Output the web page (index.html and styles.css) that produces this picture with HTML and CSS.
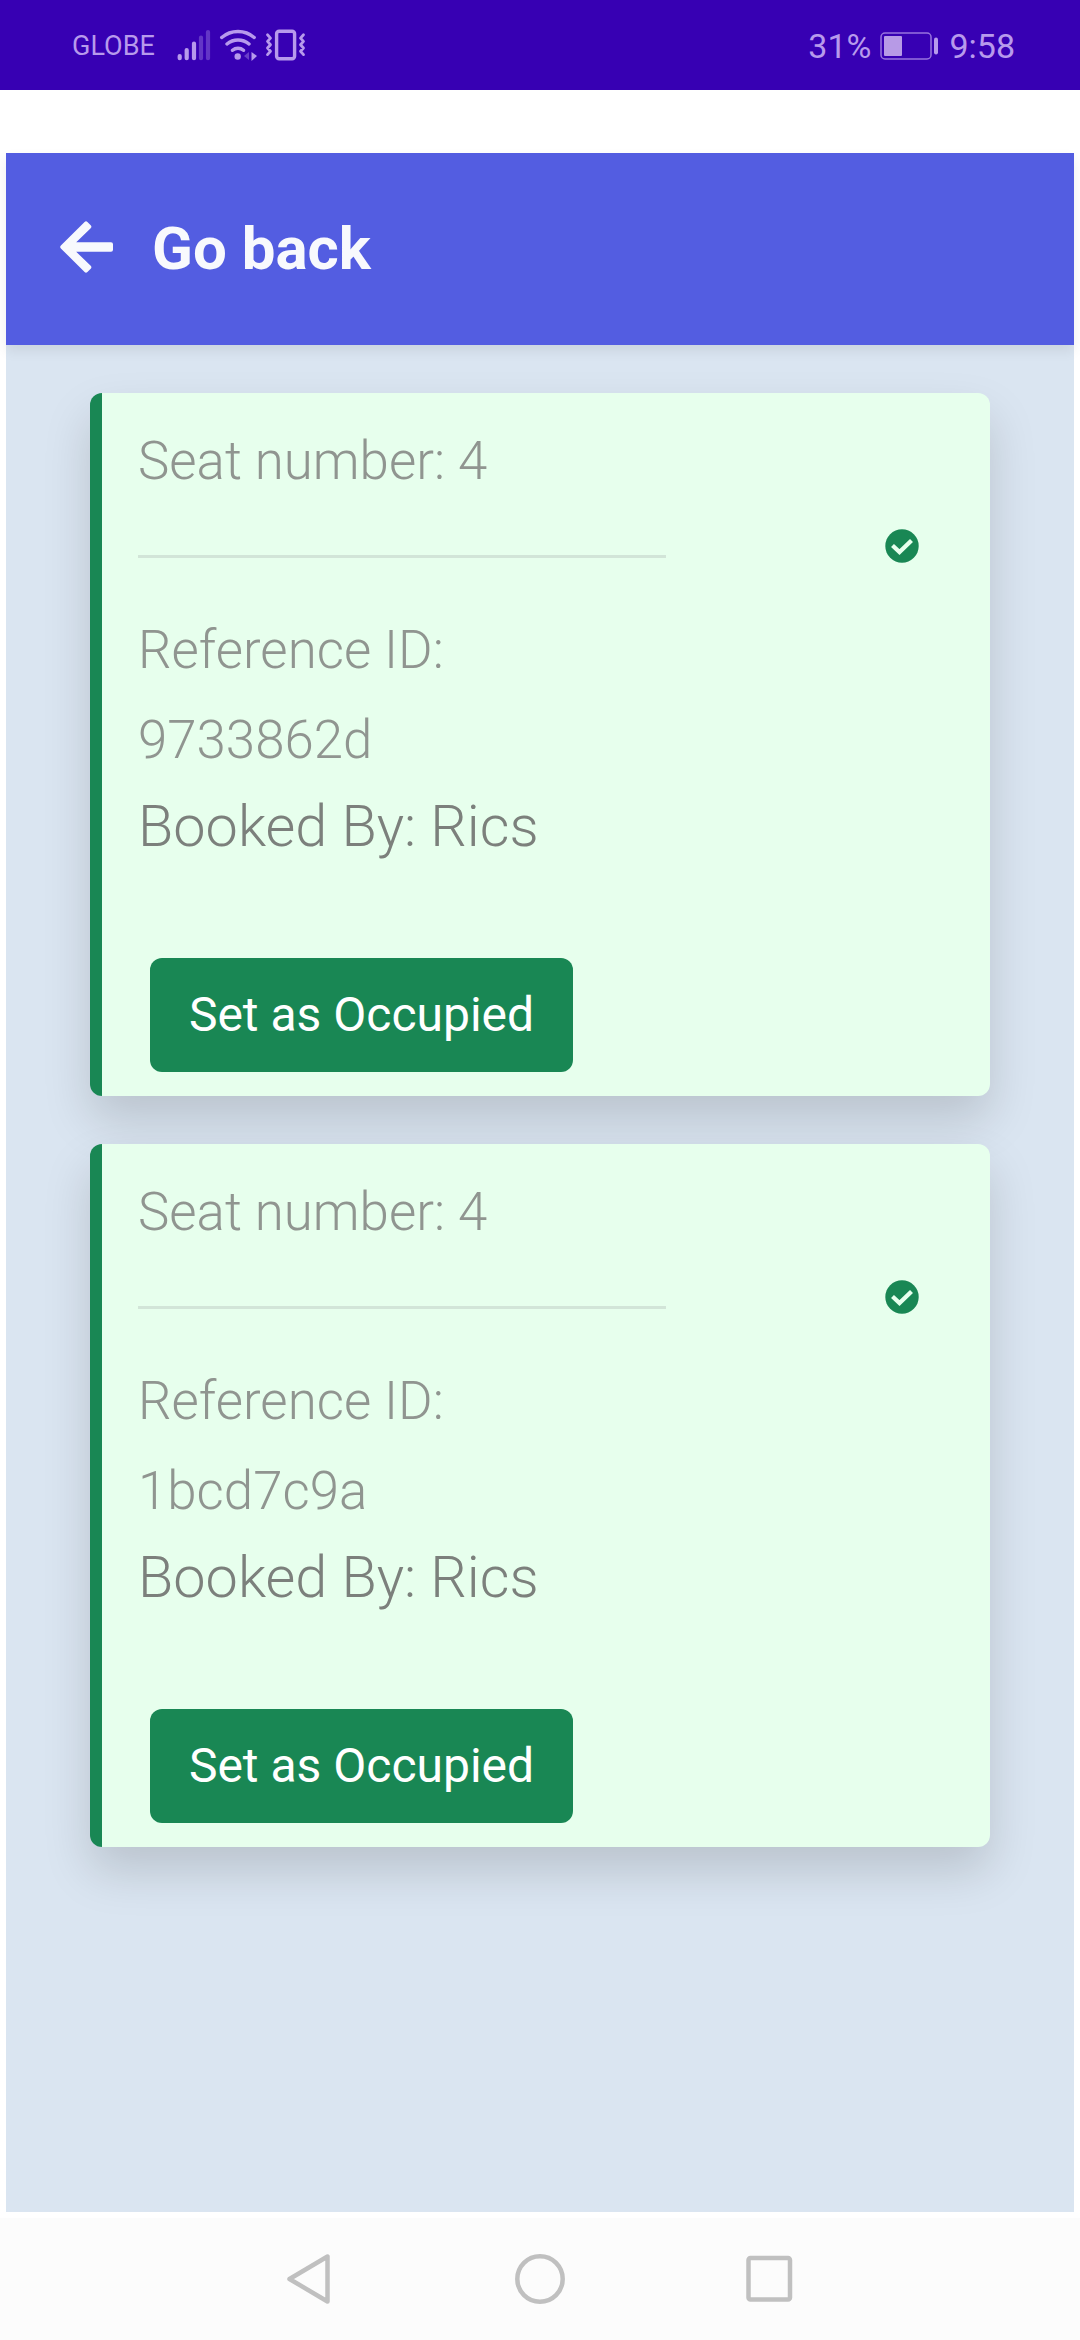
FILE: index.html
```html
<!DOCTYPE html>
<html lang="en">
<head>
<meta charset="utf-8">
<title>Bookings</title>
<link rel="stylesheet" href="styles.css">
</head>
<body>
<div class="status">
  <span class="carrier">GLOBE</span>
  <svg class="status-icons" width="136" height="40" viewBox="0 0 136 40" fill="none" stroke="#b79aec" stroke-linecap="round" stroke-linejoin="round">
    <g stroke-width="4.200"><path d="M6.700 31v2.200M13.700 25v8.200M21 18.500v14.700"/><path opacity=".35" d="M28 12.500v20.700M35 7v26.200"/></g>
    <g stroke-width="3.400"><path d="M48.700 12.500a25 25 0 0 1 32.500 0M54 19a17 17 0 0 1 22 0M59.500 25.300a8.500 8.500 0 0 1 11 0"/></g>
    <circle cx="64.700" cy="31.500" r="3.200" fill="#b79aec" stroke="none"/>
    <path d="M76 27v8l-5-4z" fill="#b79aec" stroke="none" opacity=".4"/>
    <path d="M78.500 27v9l5.500-5z" fill="#b79aec" stroke="none"/>
    <rect x="103.600" y="6.300" width="18" height="27.500" rx="2.500" stroke-width="3.400"/>
    <path stroke-width="2.800" d="M94.500 9.800l3 3.300-3 3.300 3 3.300-3 3.300 3 3.300-3 3.300M130.500 9.800l-3 3.300 3 3.300-3 3.300 3 3.300-3 3.300 3 3.300"/>
  </svg>
  <span class="spacer"></span>
  <span class="level">31%</span>
  <svg class="battery" width="60" height="30" viewBox="0 0 60 30">
    <rect x="1" y="2" width="50" height="26" rx="4" fill="none" stroke="#9873de" stroke-width="1.500"/>
    <rect x="4" y="5" width="18" height="20" rx="1" fill="#b79ae6"/>
    <rect x="54" y="6.500" width="4" height="17" rx="2" fill="#b79aec"/>
  </svg>
  <span class="clock">9:58</span>
</div>
<main class="app">
  <header class="topbar">
    <svg class="back" width="53" height="52" viewBox="0 0 53 52" fill="#f8f9fd" stroke="#f8f9fd" stroke-width="4" stroke-linejoin="round"><path d="M2.300 26L26 2.400l3.300 3.300L11.200 23.300H51v5.400H11.200l18.100 17.600L26 49.600z"/></svg>
    <h1 class="title">Go back</h1>
  </header>
  <section class="list">
    <article class="card">
      <div class="info">
        <p class="muted">Seat number: 4</p>
        <hr class="rule">
        <p class="muted">Reference ID:<br>9733862d</p>
        <p class="booked">Booked By: Rics</p>
        <button class="action">Set as Occupied</button>
      </div>
      <svg class="check" width="34" height="34" viewBox="0 0 34 34"><circle cx="17" cy="17" r="16.700" fill="#198754"/><path d="M7.500 16.500l7 6.500L26.500 11.500" fill="none" stroke="#e7ffed" stroke-width="4.300"/></svg>
    </article>
    <article class="card">
      <div class="info">
        <p class="muted">Seat number: 4</p>
        <hr class="rule">
        <p class="muted">Reference ID:<br>1bcd7c9a</p>
        <p class="booked">Booked By: Rics</p>
        <button class="action">Set as Occupied</button>
      </div>
      <svg class="check" width="34" height="34" viewBox="0 0 34 34"><circle cx="17" cy="17" r="16.700" fill="#198754"/><path d="M7.500 16.500l7 6.500L26.500 11.500" fill="none" stroke="#e7ffed" stroke-width="4.300"/></svg>
    </article>
  </section>
</main>
<nav class="navbar">
  <svg width="50" height="54" viewBox="0 0 50 54"><path d="M41.500 4.500v45L3.500 27z"/></svg>
  <svg width="54" height="54" viewBox="0 0 54 54"><circle cx="27" cy="27" r="22.700"/></svg>
  <svg width="50" height="54" viewBox="0 0 50 54"><rect x="4.500" y="6" width="41.500" height="41.500" rx="2"/></svg>
</nav>
</body>
</html>
```

FILE: styles.css
```css
* { box-sizing: border-box; }
body {
  margin: 0;
  height: 2340px;
  display: flex;
  flex-direction: column;
  background: #fff;
  font-family: Roboto, sans-serif;
}
svg { display: block; flex: none; }
.status {
  height: 90px;
  padding: 2px 65px 0 72px;
  display: flex;
  align-items: center;
  background: #3700b3;
  color: #b79aec;
  font-size: 34px;
  white-space: nowrap;
}
.carrier { font-size: 27px; width: 101px; }
.status-icons { margin-top: -2px; }
.spacer { flex: 1; }
.battery { margin: -1px 9px 0 9px; }
.app {
  margin: 63px 6px 0;
  height: 2059px;
  background: #dae5f1;
}
.topbar {
  height: 192px;
  padding-left: 54px;
  display: flex;
  align-items: center;
  background: #535de1;
  box-shadow: 0 6px 12px rgba(0, 0, 0, .075);
  color: #f8f9fd;
}
.back { margin-top: -4px; }
.title {
  margin: 0 0 0 39px;
  font-size: 60px;
  font-weight: 700;
  line-height: 90px;
}
.list {
  padding: 48px 84px;
  display: flex;
  flex-direction: column;
  gap: 48px;
}
.card {
  height: 703px;
  padding: 23px 71px 0 36px;
  display: flex;
  justify-content: space-between;
  border-left: 12px solid #198754;
  border-radius: 12px;
  background: #e7ffed;
  box-shadow: 0 24px 48px rgba(0, 0, 0, .15);
}
.info { width: 528px; }
.muted {
  margin: 0;
  font-size: 52.800px;
  font-weight: 300;
  line-height: 90px;
  color: #909590;
}
.rule {
  height: 3px;
  margin: 49px 0 47px;
  border: 0;
  background: #d2e5d8;
}
.booked {
  margin: 7px 0 97px;
  font-size: 57.600px;
  font-weight: 300;
  line-height: 69px;
  color: #7c807c;
}
.action {
  display: block;
  width: 423px;
  height: 114px;
  margin: 0 0 0 12px;
  padding: 0;
  border: 0;
  border-radius: 12px;
  background: #198754;
  color: #fff;
  font: 400 48px/72px Roboto, sans-serif;
}
.check { margin-top: 113px; }
.navbar {
  margin-top: 6px;
  height: 122px;
  padding: 0 286px;
  display: flex;
  align-items: center;
  justify-content: space-between;
  background: #fcfcfc;
}
.navbar svg { fill: none; stroke: #c0c0c0; stroke-width: 4.500; stroke-linejoin: round; }
```
